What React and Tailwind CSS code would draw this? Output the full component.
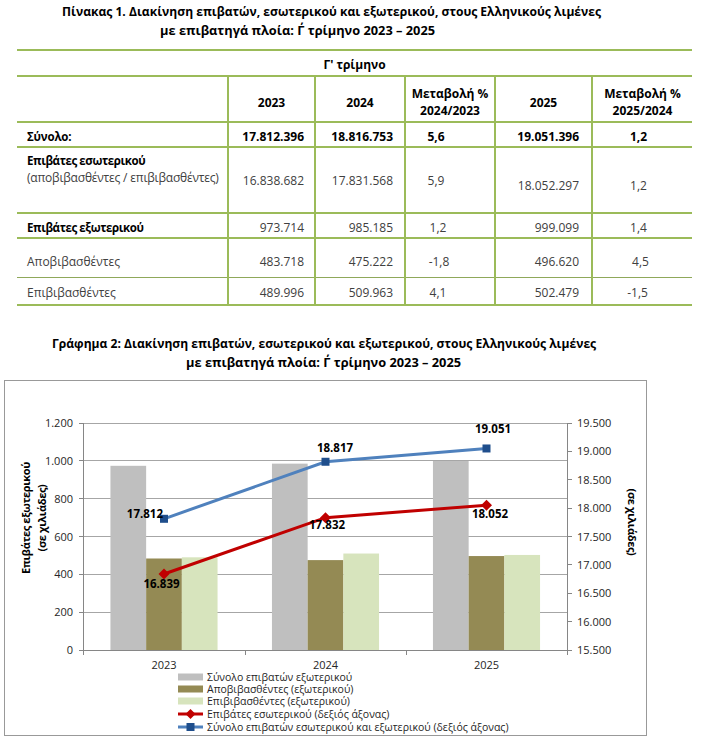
function Cell({ children, className = "" }) {
  return <td className={"border-l-2 border-[#9bbb59] " + className}>{children}</td>;
}

function Chart() {
  const grid = [0, 1, 2, 3, 4, 5, 6].map((i) => 423 + (i * 227) / 6);
  const right = [0, 1, 2, 3, 4, 5, 6, 7, 8].map((i) => 423 + (i * 227) / 8);
  const leftLabels = ["1.200", "1.000", "800", "600", "400", "200", "0"];
  const rightLabels = ["19.500", "19.000", "18.500", "18.000", "17.500", "17.000", "16.500", "16.000", "15.500"];
  const cx = [164, 325.5, 486.5];
  const bars = [
    [973.714, 483.718, 489.996],
    [985.185, 475.222, 509.963],
    [999.099, 496.62, 502.479],
  ];
  const colors = ["#bfbfbf", "#948a54", "#d7e4bd"];
  const bw = 35.7;
  const yl = (v) => 650 - (v / 1200) * 227;
  const yr = (v) => 650 - ((v - 15500) / 4000) * 227;
  const blue = [17812, 18817, 19051].map(yr);
  const red = [16839, 17832, 18052].map(yr);
  const font = "Open Sans, sans-serif";
  return (
    <svg width="641" height="354" viewBox="5 381 641 354" fontFamily={font}>
      {grid.map((y, i) => (
        <line key={"g" + i} x1="83" x2="567" y1={y} y2={y} stroke="#a6a6a6" strokeWidth="1" shapeRendering="crispEdges" />
      ))}
      {bars.map((b, c) =>
        b.map((v, k) => (
          <rect key={"b" + c + k} x={cx[c] - 1.5 * bw + k * bw} y={yl(v)} width={bw} height={650 - yl(v)} fill={colors[k]} />
        ))
      )}
      <line x1="83" x2="83" y1="423" y2="650" stroke="#868686" shapeRendering="crispEdges" />
      <line x1="567" x2="567" y1="423" y2="650" stroke="#868686" shapeRendering="crispEdges" />
      <line x1="83" x2="567" y1="650" y2="650" stroke="#868686" shapeRendering="crispEdges" />
      {grid.map((y, i) => (
        <line key={"lt" + i} x1="79" x2="83" y1={y} y2={y} stroke="#868686" shapeRendering="crispEdges" />
      ))}
      {right.map((y, i) => (
        <line key={"rt" + i} x1="567" x2="572" y1={y} y2={y} stroke="#868686" shapeRendering="crispEdges" />
      ))}
      {[83, 245, 406, 567].map((x, i) => (
        <line key={"bt" + i} x1={x} x2={x} y1="650" y2="655" stroke="#868686" shapeRendering="crispEdges" />
      ))}
      {grid.map((y, i) => (
        <text key={"ll" + i} x="73" y={y + 4} textAnchor="end" fontSize="11" fill="#262626">
          {leftLabels[i]}
        </text>
      ))}
      {right.map((y, i) => (
        <text key={"rl" + i} x="577" y={y + 4} fontSize="11" fill="#262626">
          {rightLabels[i]}
        </text>
      ))}
      {["2023", "2024", "2025"].map((t, i) => (
        <text key={"x" + i} x={cx[i]} y="669" textAnchor="middle" fontSize="11" fill="#262626">
          {t}
        </text>
      ))}
      <polyline points={cx.map((x, i) => x + "," + blue[i]).join(" ")} fill="none" stroke="#4f81bd" strokeWidth="3" />
      <polyline points={cx.map((x, i) => x + "," + red[i]).join(" ")} fill="none" stroke="#c00000" strokeWidth="3" />
      {cx.map((x, i) => (
        <rect key={"bm" + i} x={x - 4} y={blue[i] - 4} width="8" height="8" fill="#1f4e8c" />
      ))}
      {cx.map((x, i) => (
        <polygon key={"rm" + i} points={`${x},${red[i] - 5.5} ${x + 5.5},${red[i]} ${x},${red[i] + 5.5} ${x - 5.5},${red[i]}`} fill="#c00000" />
      ))}
      <g fontSize="11.5" fontWeight="700" fill="#000">
        <text x="163" y="518" textAnchor="end">17.812</text>
        <text x="335" y="452" textAnchor="middle">18.817</text>
        <text x="493" y="433" textAnchor="middle">19.051</text>
        <text x="327" y="529" textAnchor="middle">17.832</text>
        <text x="490" y="518" textAnchor="middle">18.052</text>
        <text x="161.5" y="588" textAnchor="middle">16.839</text>
      </g>
      <g fontSize="11" fontWeight="700" fill="#000" letterSpacing="-0.35">
        <text transform="rotate(-90 30 518)" x="30" y="518" textAnchor="middle">Επιβάτες εξωτερικού</text>
        <text transform="rotate(-90 46 518)" x="46" y="518" textAnchor="middle">(σε χιλιάδες)</text>
        <text transform="rotate(90 628 522)" x="628" y="522" textAnchor="middle">(σε χιλιάδες)</text>
      </g>
      <g fontSize="10.5" fill="#262626">
        <rect x="178" y="673.5" width="25" height="7" fill="#bfbfbf" />
        <text x="207" y="681">Σύνολο επιβατών εξωτερικού</text>
        <rect x="178" y="685.5" width="25" height="7" fill="#948a54" />
        <text x="207" y="693">Αποβιβασθέντες (εξωτερικού)</text>
        <rect x="178" y="697.5" width="25" height="7" fill="#d7e4bd" />
        <text x="207" y="705">Επιβιβασθέντες (εξωτερικού)</text>
        <line x1="178" x2="203" y1="714" y2="714" stroke="#c00000" strokeWidth="3" />
        <polygon points="190.5,709 195.5,714 190.5,719 185.5,714" fill="#c00000" />
        <text x="207" y="718">Επιβάτες εσωτερικού (δεξιός άξονας)</text>
        <line x1="178" x2="203" y1="727" y2="727" stroke="#4f81bd" strokeWidth="3" />
        <rect x="186.5" y="723" width="8" height="8" fill="#1f4e8c" />
        <text x="207" y="731">Σύνολο επιβατών εσωτερικού και εξωτερικού (δεξιός άξονας)</text>
      </g>
    </svg>
  );
}

export default function App() {
  return (
    <div className="w-[702px] h-[753px] bg-white font-['Open_Sans',sans-serif] text-black overflow-hidden">
      <div className="pt-[3px] font-bold leading-[18px]">
        <div className="pl-[62px] whitespace-nowrap text-[12.1px]">Πίνακας 1. Διακίνηση επιβατών, εσωτερικού και εξωτερικού, στους Ελληνικούς λιμένες</div>
        <div className="pl-[160px] whitespace-nowrap text-[12.8px]">με επιβατηγά πλοία: Γ΄ τρίμηνο 2023 – 2025</div>
      </div>
      <table className="mt-[10px] ml-[17px] w-[675px] table-fixed border-collapse text-[12px] leading-[17px]">
        <colgroup>
          <col className="w-[211px]" />
          <col className="w-[87px]" />
          <col className="w-[90px]" />
          <col className="w-[90px]" />
          <col className="w-[97px]" />
          <col className="w-[100px]" />
        </colgroup>
        <tbody>
          <tr className="h-[26px] border-t-2 border-b-2 border-[#9bbb59]">
            <td colSpan={6} className="text-center font-bold align-middle pt-[2px]">Γ' τρίμηνο</td>
          </tr>
          <tr className="h-[46px] border-b-2 border-[#9bbb59] font-bold text-center">
            <td></td>
            <Cell className="pt-[6px]">2023</Cell>
            <Cell className="pt-[6px]">2024</Cell>
            <Cell className="pt-[6px]">Μεταβολή %<br />2024/2023</Cell>
            <Cell className="pt-[6px]">2025</Cell>
            <Cell className="pt-[6px]">Μεταβολή %<br />2025/2024</Cell>
          </tr>
          <tr className="h-[25px] border-b-2 border-[#9bbb59] font-bold">
            <td className="pl-[10px] pt-[3px] text-[11.5px] tracking-[-0.2px]">Σύνολο:</td>
            <Cell className="text-right pr-[10px] pt-[3px]">17.812.396</Cell>
            <Cell className="text-right pr-[11px] pt-[3px]">18.816.753</Cell>
            <Cell className="text-center pr-[28px] pt-[3px]">5,6</Cell>
            <Cell className="text-right pr-[12px] pt-[3px]">19.051.396</Cell>
            <Cell className="text-center pr-[8px] pt-[3px]">1,2</Cell>
          </tr>
          <tr className="h-[66px] border-b-2 border-[#9bbb59] text-[#404040]">
            <td className="pl-[10px] pt-[4px] align-top">
              <div className="font-bold text-black text-[11.5px] tracking-[-0.4px]">Επιβάτες εσωτερικού</div>
              <div className="text-[12px] tracking-[-0.2px] whitespace-nowrap">(αποβιβασθέντες / επιβιβασθέντες)</div>
            </td>
            <Cell className="text-right pr-[10px]">16.838.682</Cell>
            <Cell className="text-right pr-[11px]">17.831.568</Cell>
            <Cell className="text-center pr-[28px]">5,9</Cell>
            <Cell className="text-right pr-[12px] pt-[10px]">18.052.297</Cell>
            <Cell className="text-center pr-[8px] pt-[10px]">1,2</Cell>
          </tr>
          <tr className="h-[25px] border-b-2 border-[#9bbb59] text-[#404040]">
            <td className="pl-[10px] pt-[3px] font-bold text-black text-[11.5px] tracking-[-0.4px]">Επιβάτες εξωτερικού</td>
            <Cell className="text-right pr-[10px] pt-[3px]">973.714</Cell>
            <Cell className="text-right pr-[11px] pt-[3px]">985.185</Cell>
            <Cell className="text-center pr-[24px] pt-[3px]">1,2</Cell>
            <Cell className="text-right pr-[12px] pt-[3px]">999.099</Cell>
            <Cell className="text-center pr-[8px] pt-[3px]">1,4</Cell>
          </tr>
          <tr className="h-[39px] border-b border-[#8fa85a] text-[#404040]">
            <td className="pl-[10px] pt-[8px]">Αποβιβασθέντες</td>
            <Cell className="text-right pr-[10px] pt-[8px]">483.718</Cell>
            <Cell className="text-right pr-[11px] pt-[8px]">475.222</Cell>
            <Cell className="text-center pr-[22px] pt-[8px]">-1,8</Cell>
            <Cell className="text-right pr-[12px] pt-[8px]">496.620</Cell>
            <Cell className="text-center pr-[4px] pt-[8px]">4,5</Cell>
          </tr>
          <tr className="h-[28px] border-b-2 border-[#9bbb59] text-[#404040]">
            <td className="pl-[10px] pt-[3px]">Επιβιβασθέντες</td>
            <Cell className="text-right pr-[10px] pt-[3px]">489.996</Cell>
            <Cell className="text-right pr-[11px] pt-[3px]">509.963</Cell>
            <Cell className="text-center pr-[24px] pt-[3px]">4,1</Cell>
            <Cell className="text-right pr-[12px] pt-[3px]">502.479</Cell>
            <Cell className="text-center pr-[10px] pt-[3px]">-1,5</Cell>
          </tr>
        </tbody>
      </table>
      <div className="mt-[29px] font-bold leading-[18px]">
        <div className="pl-[52px] whitespace-nowrap text-[12.1px]">Γράφημα 2: Διακίνηση επιβατών, εσωτερικού και εξωτερικού, στους Ελληνικούς λιμένες</div>
        <div className="pl-[186px] whitespace-nowrap text-[12.8px]">με επιβατηγά πλοία: Γ΄ τρίμηνο 2023 – 2025</div>
      </div>
      <div className="mt-[9px] ml-[4px] w-[643px] h-[356px] border border-[#999999]">
        <Chart />
      </div>
    </div>
  );
}
